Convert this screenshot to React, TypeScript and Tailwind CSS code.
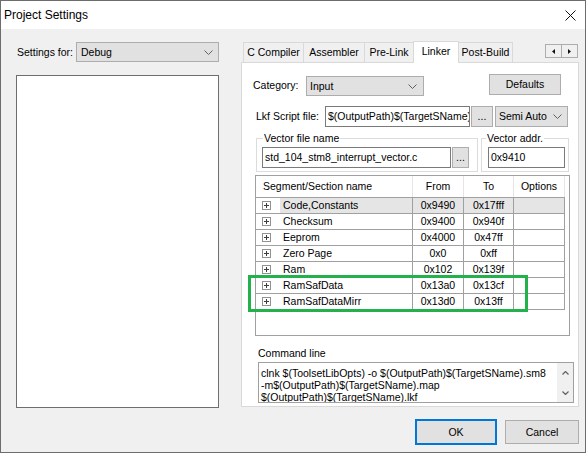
import React from "react";

const Chevron = () => (
  <svg width="9" height="5" viewBox="0 0 9 5" className="shrink-0">
    <polyline points="0.5,0.5 4.5,4.5 8.5,0.5" fill="none" stroke="#606060" strokeWidth="1" />
  </svg>
);

function Combo({ text, cls }: { text: string; cls: string }) {
  return (
    <div className={`flex items-center justify-between border border-[#adadad] bg-[#e1e1e1] pl-[3px] pr-[5px] ${cls}`}>
      <span className="whitespace-nowrap">{text}</span>
      <Chevron />
    </div>
  );
}

function Expander() {
  return (
    <svg width="9" height="9" viewBox="0 0 9 9" className="shrink-0">
      <rect x="0.5" y="0.5" width="8" height="8" fill="white" stroke="#919191" />
      <path d="M2 4.5h5M4.5 2v5" stroke="#3c3c3c" strokeWidth="1" />
    </svg>
  );
}

const rows = [
  ["Code,Constants", "0x9490", "0x17fff"],
  ["Checksum", "0x9400", "0x940f"],
  ["Eeprom", "0x4000", "0x47ff"],
  ["Zero Page", "0x0", "0xff"],
  ["Ram", "0x102", "0x139f"],
  ["RamSafData", "0x13a0", "0x13cf"],
  ["RamSafDataMirr", "0x13d0", "0x13ff"],
];

const tabs = [
  { t: "C Compiler", w: "w-[60px]" },
  { t: "Assembler", w: "w-[61px]" },
  { t: "Pre-Link", w: "w-[49px]" },
];

export default function App() {
  return (
    <div className="w-[586px] h-[453px] border border-[#6d6d6d] bg-[#f0f0f0] flex flex-col text-[10.5px] leading-[13px] text-black overflow-hidden font-['Liberation_Sans',Arial,sans-serif]">
      {/* Title bar */}
      <div className="h-[28px] shrink-0 bg-white flex items-center justify-between pl-[3px] pr-[9px]">
        <span className="text-[12px] leading-[14px]">Project Settings</span>
        <svg width="11" height="11" viewBox="0 0 11 11">
          <path d="M0.5 0.5L10.5 10.5M10.5 0.5L0.5 10.5" stroke="#111" strokeWidth="1" />
        </svg>
      </div>

      <div className="flex flex-1 min-h-0">
        {/* Left column */}
        <div className="ml-[15px] w-[203px] pt-[13px] flex flex-col">
          <div className="flex items-center h-[20px]">
            <span className="w-[60px] pl-[1px] whitespace-nowrap">Settings for:</span>
            <Combo text="Debug" cls="w-[143px] h-[20px] pl-[4px]" />
          </div>
          <div className="mt-[13px] h-[333px] bg-white border border-[#6e6e6e]" />
        </div>

        {/* Right column */}
        <div className="ml-[22px] w-[338px] pt-[12px] flex flex-col">
          {/* Tab strip */}
          <div className="flex items-start h-[21px] relative z-10">
            <div className="ml-[2px] flex items-start">
              {tabs.map((x) => (
                <div
                  key={x.t}
                  className={`mt-[1px] h-[20px] ${x.w} border-t border-l border-[#d9d9d9] bg-[#f0f0f0] flex items-center justify-center whitespace-nowrap`}
                >
                  {x.t}
                </div>
              ))}
              <div className="h-[22px] w-[46px] border-t border-l border-r border-[#d9d9d9] bg-white flex items-center justify-center pb-[2px]">
                Linker
              </div>
              <div className="mt-[1px] h-[20px] w-[54px] border-t border-r border-[#d9d9d9] bg-[#f0f0f0] flex items-center justify-center whitespace-nowrap">
                Post-Build
              </div>
            </div>
            <div className="ml-auto mt-[3px] mr-[1px] flex">
              <div className="w-[17px] h-[14px] border border-[#adadad] bg-[#f0f0f0] flex items-center justify-center">
                <svg width="3" height="5" viewBox="0 0 3 5"><path d="M3 0L0 2.5L3 5Z" fill="#111" /></svg>
              </div>
              <div className="-ml-px w-[17px] h-[14px] border border-[#adadad] bg-[#f0f0f0] flex items-center justify-center">
                <svg width="3" height="5" viewBox="0 0 3 5"><path d="M0 0L3 2.5L0 5Z" fill="#111" /></svg>
              </div>
            </div>
          </div>

          {/* Panel */}
          <div className="h-[345px] bg-white border border-[#d9d9d9] flex flex-col">
            {/* Category row */}
            <div className="flex items-start mt-[11px]">
              <span className="ml-[11px] w-[53px] mt-[5px]">Category:</span>
              <Combo text="Input" cls="mt-[2px] w-[118px] h-[20px] pr-[6px]" />
              <div className="ml-auto mr-[17px] w-[72px] h-[21px] border border-[#adadad] bg-[#e1e1e1] flex items-center justify-center">
                Defaults
              </div>
            </div>

            {/* Lkf row */}
            <div className="flex items-center mt-[10px] h-[21px]">
              <span className="ml-[14px] w-[69px] whitespace-nowrap">Lkf Script file:</span>
              <div className="w-[145px] h-[21px] border border-[#7a7a7a] bg-white pl-[2px] overflow-hidden whitespace-nowrap flex items-center">
                $(OutputPath)$(TargetSName).lkf
              </div>
              <div className="ml-[1px] w-[22px] h-[21px] border border-[#adadad] bg-[#e1e1e1] flex items-center justify-center">
                ...
              </div>
              <Combo text="Semi Auto" cls="ml-[2px] w-[73px] h-[21px] pr-[4px]" />
            </div>

            {/* Group boxes */}
            <div className="flex mt-[11px] ml-[14px]">
              <div className="w-[222px] h-[34px] border border-[#dcdcdc] flex flex-col">
                <span className="-mt-[7px] ml-[6px] px-[1px] bg-white w-fit whitespace-nowrap">Vector file name</span>
                <div className="flex mt-[2px] ml-[5px]">
                  <div className="w-[189px] h-[21px] border border-[#7a7a7a] bg-white pl-[2px] flex items-center whitespace-nowrap overflow-hidden">
                    std_104_stm8_interrupt_vector.c
                  </div>
                  <div className="ml-[1px] w-[17px] h-[21px] border border-[#adadad] bg-[#e1e1e1] flex items-center justify-center">
                    ...
                  </div>
                </div>
              </div>
              <div className="ml-[3px] w-[88px] h-[34px] border border-[#dcdcdc] flex flex-col">
                <span className="-mt-[7px] ml-[4px] px-[1px] bg-white w-fit whitespace-nowrap">Vector addr.</span>
                <div className="mt-[2px] ml-[6px] w-[77px] h-[21px] border border-[#7a7a7a] bg-white pl-[2px] flex items-center">
                  0x9410
                </div>
              </div>
            </div>

            {/* Table */}
            <div className="relative mt-[3px] ml-[13px] w-[315px] h-[161px] border border-[#a0a0a0] bg-white">
              <div className="flex h-[22px] w-[309px] border-b border-[#a0a0a0]">
                <div className="w-[156px] pl-[7px] flex items-center whitespace-nowrap">Segment/Section name</div>
                <div className="w-[51px] border-l border-[#e5e5e5] flex items-center justify-center">From</div>
                <div className="w-[50px] border-l border-[#e5e5e5] flex items-center justify-center">To</div>
                <div className="w-[52px] border-l border-r border-[#e5e5e5] flex items-center justify-center">Options</div>
              </div>
              {rows.map((r, i) => {
                const hl = i === 0 ? "bg-[#e5e5e5]" : "";
                return (
                  <div key={r[0]} className="flex h-[16px] w-[309px] border-b border-[#a0a0a0]">
                    <div className="w-[24px] pl-[6px] flex items-center">
                      <Expander />
                    </div>
                    <div className={`w-[132px] pl-[3px] flex items-center whitespace-nowrap ${hl}`}>{r[0]}</div>
                    <div className={`w-[51px] border-l border-[#a0a0a0] flex items-center justify-center ${hl}`}>{r[1]}</div>
                    <div className={`w-[50px] border-l border-[#a0a0a0] flex items-center justify-center ${hl}`}>{r[2]}</div>
                    <div className={`w-[52px] border-l border-r border-[#a0a0a0] ${hl}`} />
                  </div>
                );
              })}
              <div className="absolute left-[-8px] top-[99px] w-[280px] h-[37px] border-[3px] border-[#22b14c] pointer-events-none" />
            </div>

            {/* Command line */}
            <span className="mt-[11px] ml-[16px]">Command line</span>
            <div className="mt-[2px] ml-[16px] w-[316px] h-[41px] border border-[#a0a0a0] bg-white flex">
              <div className="flex-1 pl-[2px] pt-[4px] leading-[12px] overflow-hidden">
                <div className="whitespace-nowrap">clnk $(ToolsetLibOpts) -o $(OutputPath)$(TargetSName).sm8</div>
                <div className="whitespace-nowrap">-m$(OutputPath)$(TargetSName).map</div>
                <div className="whitespace-nowrap">$(OutputPath)$(TargetSName).lkf</div>
              </div>
              <div className="w-[16px] bg-[#f0f0f0] flex flex-col items-center justify-between pt-[8px] pb-[7px]">
                <svg width="7" height="4" viewBox="0 0 7 4"><polyline points="0.5,3.5 3.5,0.5 6.5,3.5" fill="none" stroke="#606060" strokeWidth="1.2" /></svg>
                <svg width="7" height="4" viewBox="0 0 7 4"><polyline points="0.5,0.5 3.5,3.5 6.5,0.5" fill="none" stroke="#606060" strokeWidth="1.2" /></svg>
              </div>
            </div>
          </div>

          {/* Buttons */}
          <div className="flex justify-end items-center gap-[8px] mt-[12px]">
            <div className="w-[82px] h-[26px] border-2 border-[#0078d7] bg-[#e1e1e1] flex items-center justify-center">OK</div>
            <div className="w-[74px] h-[24px] border border-[#adadad] bg-[#e1e1e1] flex items-center justify-center">Cancel</div>
          </div>
        </div>
      </div>
    </div>
  );
}
